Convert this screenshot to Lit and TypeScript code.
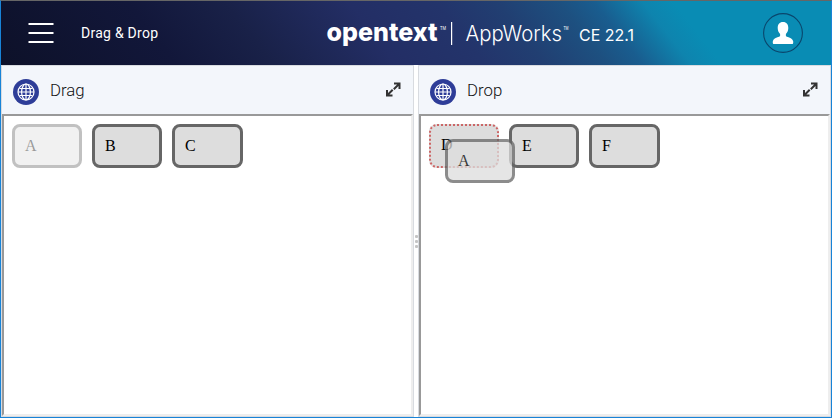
import { LitElement, html, css } from "lit";
import { customElement, property } from "lit/decorators.js";

@customElement("drag-card")
class DragCard extends LitElement {
  @property() label = "";
  @property({ reflect: true }) state = "";
  static styles = css`
    :host { box-sizing: border-box; display: block; border: 3px solid #666; background: #ddd;
      border-radius: 8px; padding: 10px; font: 16px/18px "Liberation Serif", serif; color: #000; }
    :host([state="moving"]) { opacity: .4; }
    :host([state="over"]) { border: 2px dotted #c66; }
    :host([state="ghost"]) { opacity: .75; }
  `;
  render() { return html`${this.label}`; }
}

@customElement("app-panel")
class AppPanel extends LitElement {
  @property() heading = "";
  static styles = css`
    :host { box-sizing: border-box; display: flex; flex-direction: column; border: 1px solid #d8dbe0; min-width: 0; }
    .bar { box-sizing: border-box; height: 48px; background: #f3f6fb; display: flex; align-items: center; padding: 2px 12px 0 11px; }
    .globe { width: 26px; height: 26px; margin-top: 1px; flex: none; }
    .name { flex: 1; margin: 0 0 2px 11px; font: 300 16.8px/20px Roboto, sans-serif; color: #111; }
    .expand { width: 15px; height: 15px; flex: none; margin: 0 0 3px 0; }
    .frame { box-sizing: border-box; flex: 1; border: 2px solid; border-color: #999 #eee #eee #999; background: #fff; padding: 8px; }
  `;
  render() {
    return html`
      <div class="bar">
        <svg class="globe" viewBox="0 0 26 26" fill="none" stroke="#fff" stroke-width="1.2">
          <circle cx="13" cy="13" r="13" fill="#2e3d98" stroke="none"/>
          <circle cx="13" cy="13" r="8"/><ellipse cx="13" cy="13" rx="4.4" ry="8"/>
          <path d="M13 5V21M5 13H21M6.5 9.5H19.5M6.5 16.5H19.5"/>
        </svg>
        <span class="name">${this.heading}</span>
        <svg class="expand" viewBox="0 0 15 15" fill="none" stroke="#333" stroke-width="2">
          <path d="M8 1.500H13.500V7M13.500 1.500L7.800 7.200M1 8V13.500H6.500M1 13.500L6.700 7.800"/>
        </svg>
      </div>
      <div class="frame"><slot></slot></div>`;
  }
}

@customElement("app-root")
class AppRoot extends LitElement {
  static styles = css`
    :host { box-sizing: border-box; display: flex; flex-direction: column; width: 832px; height: 418px; background: #fff;
      border: 1px solid #1883d7; border-top-color: #666; overflow: hidden; }
    header { height: 64px; flex: none; display: flex; align-items: center;
      background: linear-gradient(52deg, #0d1129 0%, #12173a 20%, #192148 31%, #232e65 45%, #23346b 55%, #213f72 62%, #1d5080 69%, #195d8f 73%, #0e84ae 78.5%, #098cb4 82%); }
    .menu { width: 26px; height: 22px; margin-left: 27px; }
    .title { width: 245px; margin-left: 27px; color: #fff; font: 14px/20px Roboto, sans-serif; letter-spacing: .26px; }
    .logo { width: 312px; height: 40px; fill: #fff; }
    .user { width: 40px; height: 40px; margin-left: auto; margin-right: 28px; }
    .work { flex: 1; min-height: 0; display: flex; }
    app-panel { width: 413px; }
    .split { width: 4px; display: flex; flex-direction: column; align-items: center; justify-content: center; gap: 2px; }
    .split i { width: 3px; height: 3px; border-radius: 1px; background: #c4c4c4; }
    .cards { display: grid; grid-template-columns: 70px 70px 71px; gap: 10px; height: 44px; position: relative; }
    .ghost { position: absolute; left: 16px; top: 15px; width: 70px; height: 44px; }
  `;
  render() {
    return html`
      <header>
        <svg class="menu" viewBox="0 0 26 22" fill="#fff"><path d="M.5 1H25.5V3H.5ZM.5 10H25.5V12H.5ZM.5 19H25.5V21H.5Z"/></svg>
        <span class="title">Drag &amp; Drop</span>
        <svg class="logo" viewBox="326 13 312 40">
          <text x="326.5" y="41" textLength="111" lengthAdjust="spacingAndGlyphs" font-family="Inter" font-weight="800" font-size="26">opentext</text>
          <text x="440" y="30" textLength="6" lengthAdjust="spacingAndGlyphs" font-family="Inter" font-size="5">TM</text>
          <rect x="451" y="22" width="1.2" height="23"/>
          <text x="465.5" y="41" textLength="96.5" lengthAdjust="spacingAndGlyphs" font-family="Inter" font-weight="350" font-size="21">AppWorks</text>
          <text x="563.5" y="30" textLength="5" lengthAdjust="spacingAndGlyphs" font-family="Inter" font-size="5">TM</text>
          <text x="579" y="41" textLength="55" lengthAdjust="spacingAndGlyphs" font-family="Inter" font-weight="400" font-size="16.5">CE 22.1</text>
        </svg>
        <svg class="user" viewBox="0 0 40 40">
          <circle cx="20" cy="20" r="19.4" fill="none" stroke="#0a466c" stroke-width="1.1"/>
          <path fill="#fff" d="M20 9c3.600 0 5.300 2.500 5.300 6 0 2.500-1 4.700-2.400 6v2c0 1 6.200 1.400 7.200 5 .3 1.200.1 3-.6 3H10.500c-.7 0-.9-1.800-.6-3 1-3.600 7.200-4 7.200-5v-2c-1.400-1.300-2.400-3.500-2.400-6 0-3.500 1.700-6 5.300-6Z"/>
        </svg>
      </header>
      <div class="work">
        <app-panel heading="Drag"><div class="cards">
          <drag-card label="A" state="moving"></drag-card><drag-card label="B"></drag-card><drag-card label="C"></drag-card>
        </div></app-panel>
        <div class="split"><i></i><i></i><i></i></div>
        <app-panel heading="Drop"><div class="cards">
          <drag-card label="D" state="over"></drag-card><drag-card label="E"></drag-card><drag-card label="F"></drag-card>
          <drag-card class="ghost" label="A" state="ghost"></drag-card>
        </div></app-panel>
      </div>`;
  }
}
